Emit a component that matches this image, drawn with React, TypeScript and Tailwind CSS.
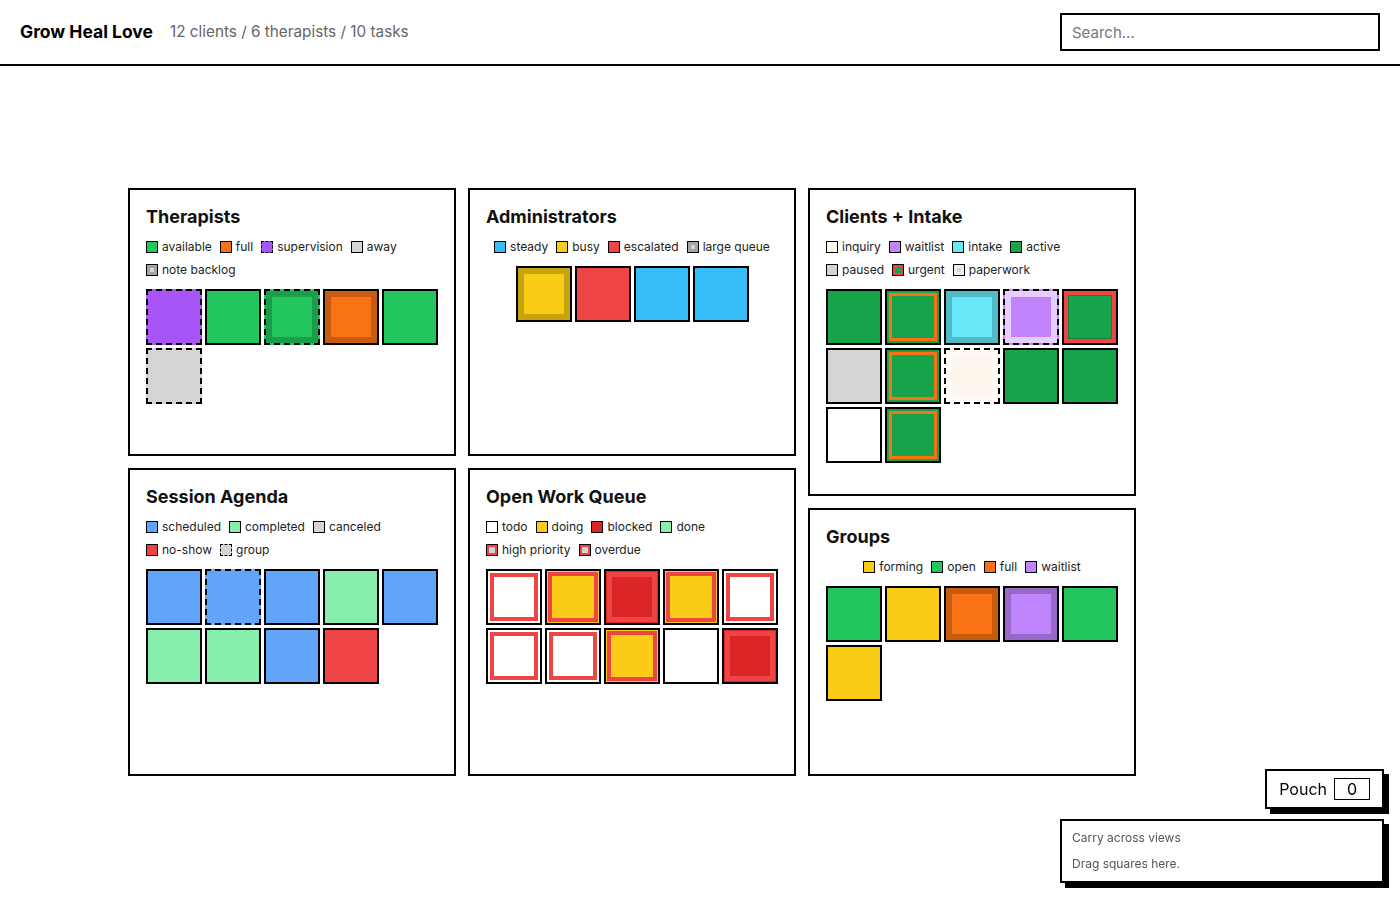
import React from 'react'

type Swatch = { label: string; className: string }
type Board = {
  title: string
  height: string
  legend: Swatch[]
  tiles: string[]
}

// tile looks, spelled out so the stylesheet picks them up
const darkRing = 'shadow-[inset_0_0_0_6px_rgba(0,0,0,0.2)]'
const lightRing = 'shadow-[inset_0_0_0_6px_rgba(255,255,255,0.6)]'
const orangeFrame = 'bg-[#16a34a] shadow-[inset_0_0_0_2px_#16a34a,inset_0_0_0_5px_#f97316]'
const urgentFrame = 'bg-[#16a34a] shadow-[inset_0_0_0_4px_#ef4444,inset_0_0_0_5px_#15803d]'
const whiteFlag = 'bg-white shadow-[inset_0_0_0_2px_#ffffff,inset_0_0_0_6px_#ef4444]'
const yellowFlag = 'bg-[#facc15] shadow-[inset_0_0_0_1px_#facc15,inset_0_0_0_5px_#ef4444]'
const blockedFlag = 'bg-[#dc2626] shadow-[inset_0_0_0_1px_#dc2626,inset_0_0_0_6px_#ef4444]'

const backlogSwatch = 'bg-[#d4d4d4] shadow-[inset_0_0_0_3px_#a3a3a3]'

const therapists: Board = {
  title: 'Therapists',
  height: 'h-[268px]',
  legend: [
    { label: 'available', className: 'bg-[#22c55e]' },
    { label: 'full', className: 'bg-[#f97316]' },
    { label: 'supervision', className: 'bg-[#a855f7] border-dashed' },
    { label: 'away', className: 'bg-[#d4d4d4]' },
    { label: 'note backlog', className: backlogSwatch },
  ],
  tiles: [
    'bg-[#a855f7] border-dashed',
    'bg-[#22c55e]',
    `bg-[#22c55e] border-dashed ${darkRing}`,
    `bg-[#f97316] ${darkRing}`,
    'bg-[#22c55e]',
    'bg-[#d4d4d4] border-dashed',
  ],
}

const admins: Board = {
  title: 'Administrators',
  height: 'h-[268px]',
  legend: [
    { label: 'steady', className: 'bg-[#38bdf8]' },
    { label: 'busy', className: 'bg-[#facc15]' },
    { label: 'escalated', className: 'bg-[#ef4444]' },
    { label: 'large queue', className: backlogSwatch },
  ],
  tiles: [`bg-[#facc15] ${darkRing}`, 'bg-[#ef4444]', 'bg-[#38bdf8]', 'bg-[#38bdf8]'],
}

const clients: Board = {
  title: 'Clients + Intake',
  height: 'h-[308px]',
  legend: [
    { label: 'inquiry', className: 'bg-[#fff7ed]' },
    { label: 'waitlist', className: 'bg-[#c084fc]' },
    { label: 'intake', className: 'bg-[#67e8f9]' },
    { label: 'active', className: 'bg-[#16a34a]' },
    { label: 'paused', className: 'bg-[#d4d4d4]' },
    { label: 'urgent', className: 'bg-[#16a34a] shadow-[inset_0_0_0_2px_#ef4444]' },
    { label: 'paperwork', className: 'bg-[#d4d4d4] shadow-[inset_0_0_0_3px_#f0f0f0]' },
  ],
  tiles: [
    'bg-[#16a34a]',
    orangeFrame,
    `bg-[#67e8f9] ${darkRing}`,
    `bg-[#c084fc] border-dashed border-[#e9d5ff] ${lightRing}`,
    urgentFrame,
    'bg-[#d4d4d4]',
    orangeFrame,
    `bg-[#fff7ed] border-dashed ${lightRing}`,
    'bg-[#16a34a]',
    'bg-[#16a34a]',
    'bg-white',
    orangeFrame,
  ],
}

const sessions: Board = {
  title: 'Session Agenda',
  height: 'h-[308px]',
  legend: [
    { label: 'scheduled', className: 'bg-[#60a5fa]' },
    { label: 'completed', className: 'bg-[#86efac]' },
    { label: 'canceled', className: 'bg-[#d4d4d4]' },
    { label: 'no-show', className: 'bg-[#ef4444]' },
    { label: 'group', className: 'bg-[#d4d4d4] border-dashed' },
  ],
  tiles: [
    'bg-[#60a5fa]',
    'bg-[#60a5fa] border-dashed',
    'bg-[#60a5fa]',
    'bg-[#86efac]',
    'bg-[#60a5fa]',
    'bg-[#86efac]',
    'bg-[#86efac]',
    'bg-[#60a5fa]',
    'bg-[#ef4444]',
  ],
}

const queue: Board = {
  title: 'Open Work Queue',
  height: 'h-[308px]',
  legend: [
    { label: 'todo', className: 'bg-white' },
    { label: 'doing', className: 'bg-[#facc15]' },
    { label: 'blocked', className: 'bg-[#dc2626]' },
    { label: 'done', className: 'bg-[#86efac]' },
    { label: 'high priority', className: 'bg-[#d4d4d4] shadow-[inset_0_0_0_2px_#ef4444]' },
    { label: 'overdue', className: 'bg-[#d4d4d4] shadow-[inset_0_0_0_2px_#ef4444]' },
  ],
  tiles: [
    whiteFlag,
    yellowFlag,
    blockedFlag,
    yellowFlag,
    whiteFlag,
    whiteFlag,
    whiteFlag,
    yellowFlag,
    'bg-white',
    blockedFlag,
  ],
}

const groups: Board = {
  title: 'Groups',
  height: 'h-[268px]',
  legend: [
    { label: 'forming', className: 'bg-[#facc15]' },
    { label: 'open', className: 'bg-[#22c55e]' },
    { label: 'full', className: 'bg-[#f97316]' },
    { label: 'waitlist', className: 'bg-[#c084fc]' },
  ],
  tiles: [
    'bg-[#22c55e]',
    'bg-[#facc15]',
    `bg-[#f97316] ${darkRing}`,
    `bg-[#c084fc] ${darkRing}`,
    'bg-[#22c55e]',
    'bg-[#facc15]',
  ],
}

const columns: Board[][] = [
  [therapists, sessions],
  [admins, queue],
  [clients, groups],
]

function Panel({ board }: { board: Board }) {
  return (
    <section className={`${board.height} border-2 border-black bg-white p-4`}>
      <h2 className="text-[18px] leading-[22px] font-bold text-[#111] mb-2.5">{board.title}</h2>
      <div className="flex flex-wrap gap-x-2 gap-y-1.5 w-fit max-w-full mx-auto mb-[11px]">
        {board.legend.map((s) => (
          <div key={s.label} className="flex items-center gap-1 h-[17px]">
            <span className={`w-3 h-3 border border-black ${s.className}`} />
            <span className="text-xs text-[#222]">{s.label}</span>
          </div>
        ))}
      </div>
      <div className="flex flex-wrap gap-[3px] w-fit max-w-full mx-auto">
        {board.tiles.map((t, i) => (
          <div key={i} className={`w-14 h-14 border-2 border-black ${t}`} />
        ))}
      </div>
    </section>
  )
}

export default function App() {
  return (
    <div className="min-h-[900px] bg-white font-['Inter',sans-serif] text-black">
      <header className="h-[66px] flex items-center justify-between px-5 border-b-2 border-black">
        <div className="flex items-center gap-[17px]">
          <h1 className="text-[17.5px] font-bold">Grow Heal Love</h1>
          <span className="text-[15.3px] text-[#666]">12 clients / 6 therapists / 10 tasks</span>
        </div>
        <input
          placeholder="Search..."
          className="w-[320px] h-[38px] border-2 border-black px-2.5 text-[15px] placeholder:text-[#777] outline-none"
        />
      </header>

      <main className="pt-[122px] pl-[128px]">
        <div className="grid grid-cols-[328px_328px_328px] gap-3">
          {columns.map((col, i) => (
            <div key={i} className="flex flex-col gap-3">
              {col.map((b) => (
                <Panel key={b.title} board={b} />
              ))}
            </div>
          ))}
        </div>
      </main>

      {/* pouch dock, floating bottom right */}
      <div className="fixed right-4 bottom-[17px] flex flex-col items-end gap-2.5">
        <div className="h-10 border-2 border-black bg-white px-3 flex items-center gap-[7px] shadow-[5px_5px_0_#000]">
          <span className="text-base">Pouch</span>
          <span className="w-9 h-[22px] border border-black flex items-center justify-center text-base leading-none">0</span>
        </div>
        <div className="w-[324px] border-2 border-black bg-white px-2.5 py-2 flex flex-col gap-2 shadow-[5px_5px_0_#000]">
          <span className="text-xs leading-[18px] text-[#555]">Carry across views</span>
          <span className="text-xs leading-[18px] text-[#555]">Drag squares here.</span>
        </div>
      </div>
    </div>
  )
}
